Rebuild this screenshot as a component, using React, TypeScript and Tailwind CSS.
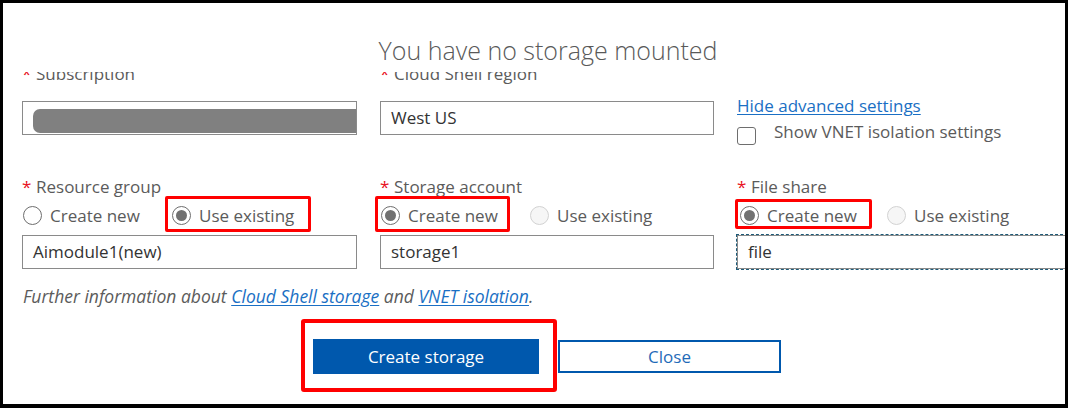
import type { ReactNode } from "react";

const font = { fontFamily: '"Open Sans", "Noto Sans", Arial, sans-serif' };

function Radio({ state }: { state: "on" | "off" | "dim" }) {
  if (state === "on") {
    return (
      <span className="w-[19px] h-[19px] rounded-full border-[1.5px] border-[#6e6e6e] bg-white flex items-center justify-center shrink-0">
        <span className="w-[11px] h-[11px] rounded-full bg-[#717171]" />
      </span>
    );
  }
  if (state === "dim") {
    return (
      <span className="w-[19px] h-[19px] rounded-full border-[1.5px] border-[#d2d2d2] bg-[#f6f6f6] shrink-0" />
    );
  }
  return (
    <span className="w-[19px] h-[19px] rounded-full border-[1.5px] border-[#6e6e6e] bg-white shrink-0" />
  );
}

function Option({
  state,
  label,
  box,
}: {
  state: "on" | "off" | "dim";
  label: string;
  box?: string;
}) {
  return (
    <div className="relative flex items-center gap-[8px]">
      <Radio state={state} />
      <span className="text-[17px] leading-[23px] text-[#5b5b5b] whitespace-nowrap">{label}</span>
      {box && (
        <span
          className={`absolute border-[3px] border-[#ff0000] rounded-[2px] pointer-events-none ${box}`}
        />
      )}
    </div>
  );
}

function Label({ children }: { children: ReactNode }) {
  return (
    <div className="text-[17px] leading-[23px] text-[#5b5b5b] whitespace-nowrap">
      <span className="inline-block w-[14px] text-[#e81123]">*</span>
      {children}
    </div>
  );
}

function TextBox({ value, focused }: { value: string; focused?: boolean }) {
  return (
    <div
      className={`h-[34px] border border-[#8a8a8a] bg-white flex items-center px-[10px] text-[17px] text-[#333] ${
        focused ? "outline-1 outline-dashed outline-[#1d5a78]" : ""
      }`}
    >
      {value}
    </div>
  );
}

export default function App() {
  return (
    <div
      className="w-[1068px] h-[408px] bg-black border-t-[3px] border-l-[3px] border-r-[3px] border-b-[4px] border-black"
      style={font}
    >
      <div className="w-full h-full bg-white overflow-hidden">
        {/* the heading's white box hides the top of the first labels */}
        <div className="relative z-10 bg-white h-[69px] pt-[31px] pl-[28px] flex justify-center">
          <h1 className="text-[25px] leading-[32px] font-light text-[#595959] whitespace-nowrap">
            You have no storage mounted
          </h1>
        </div>

        <div className="-mt-[10px] h-[73px] pl-[19px] grid grid-cols-[335px_334px_335px] gap-x-[23px]">
          <div>
            <Label>Subscription</Label>
            <div className="mt-[16px] h-[34px] border border-[#8a8a8a] bg-white flex items-end pl-[10px] pb-[1px]">
              <div className="h-[24px] w-full bg-[#808080] rounded-l-[7px]" />
            </div>
          </div>
          <div>
            <Label>Cloud Shell region</Label>
            <div className="mt-[16px]">
              <TextBox value="West US" />
            </div>
          </div>
          <div className="pt-[32px]">
            <a className="block text-[17px] leading-[23px] text-[#1a6fc4] underline underline-offset-2 whitespace-nowrap">
              Hide advanced settings
            </a>
            <div className="mt-[3px] flex items-start">
              <span className="mt-[7px] w-[19px] h-[18px] border-[1.5px] border-[#6e6e6e] rounded-[3px] bg-white shrink-0" />
              <span className="ml-[18px] text-[17px] leading-[23px] text-[#5b5b5b] whitespace-nowrap">
                Show VNET isolation settings
              </span>
            </div>
          </div>
        </div>

        <div className="mt-[40px] pl-[19px] grid grid-cols-[335px_334px_335px] gap-x-[23px]">
          <div>
            <Label>Resource group</Label>
            <div className="mt-[6px] pl-[1px] flex">
              <div className="flex w-[149px]">
                <Option state="off" label="Create new" />
              </div>
              <Option
                state="on"
                label="Use existing"
                box="-left-[7px] -right-[17px] -top-[8px] -bottom-[5px]"
              />
            </div>
            <div className="mt-[8px]">
              <TextBox value="Aimodule1(new)" />
            </div>
          </div>
          <div>
            <Label>Storage account</Label>
            <div className="mt-[6px] pl-[1px] flex">
              <div className="flex w-[149px]">
                <Option
                  state="on"
                  label="Create new"
                  box="-left-[6px] -right-[12px] -top-[8px] -bottom-[5px]"
                />
              </div>
              <Option state="dim" label="Use existing" />
            </div>
            <div className="mt-[8px]">
              <TextBox value="storage1" />
            </div>
          </div>
          <div>
            <Label>File share</Label>
            <div className="mt-[6px] pl-[3px] flex">
              <div className="flex w-[147px]">
                <Option
                  state="on"
                  label="Create new"
                  box="-left-[5px] -right-[15px] -top-[5px] -bottom-[2px]"
                />
              </div>
              <Option state="dim" label="Use existing" />
            </div>
            <div className="mt-[8px]">
              <TextBox value="file" focused />
            </div>
          </div>
        </div>

        <p className="mt-[16px] pl-[20px] text-[17.5px] leading-[23px] italic text-[#5b5b5b] whitespace-nowrap">
          Further information about{" "}
          <a className="text-[#1a6fc4] underline underline-offset-2">Cloud Shell storage</a> and{" "}
          <a className="text-[#1a6fc4] underline underline-offset-2">VNET isolation</a>.
        </p>

        <div className="mt-[31px] ml-[310px] flex items-center gap-[19px]">
          <div className="relative">
            <button className="w-[226px] h-[35px] bg-[#0058ad] text-white text-[17px]">
              Create storage
            </button>
            <span className="absolute -left-[12px] -top-[20px] -right-[18px] -bottom-[18px] border-[4px] border-[#ff0000] rounded-[3px] pointer-events-none" />
          </div>
          <button className="w-[223px] h-[33px] border-2 border-[#0058ad] bg-white text-[#1f6bb8] text-[17px]">
            Close
          </button>
        </div>
      </div>
    </div>
  );
}
